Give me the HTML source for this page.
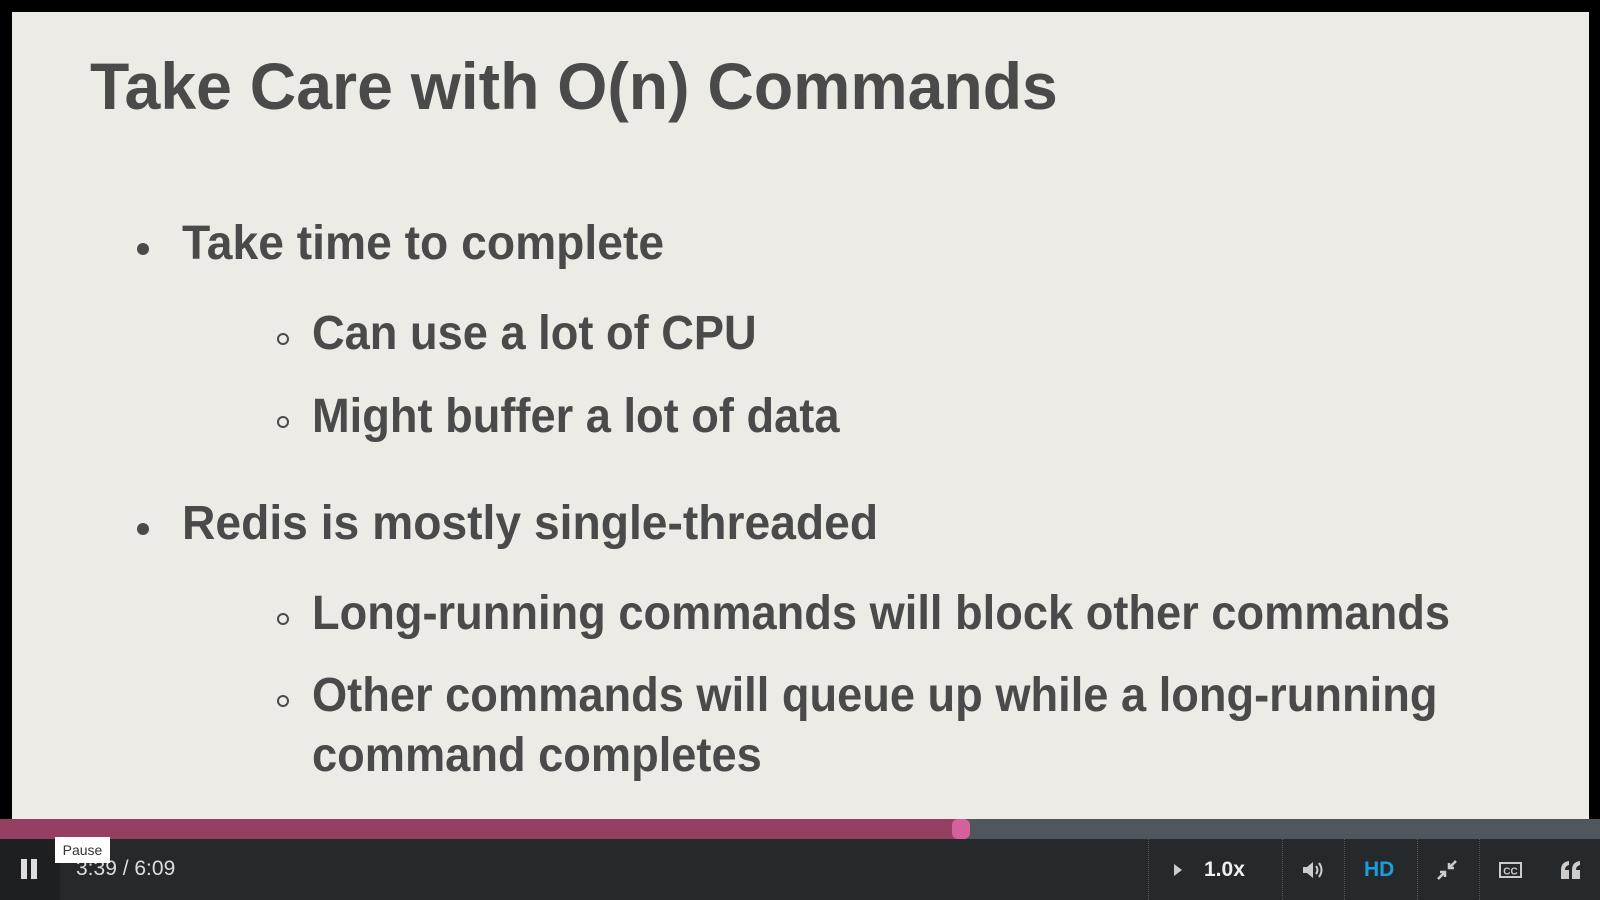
<!DOCTYPE html>
<html><head><meta charset="utf-8"><style>
*{margin:0;padding:0;box-sizing:border-box}
body{width:1600px;height:900px;background:#000;position:relative;overflow:hidden;font-family:"Liberation Sans",sans-serif}
#slide{position:absolute;left:12px;top:12px;width:1577px;height:808px;background:#edebe6;}
.t{position:absolute;color:#4a4a4a;font-weight:bold;white-space:nowrap;transform-origin:left bottom}
.h{font-size:66px;left:78px;top:36px;transform:scaleX(0.975)}
.l1{font-size:48px;left:182px;transform:scaleX(0.963)}
.l2{font-size:48px;left:312px;transform:scaleX(0.942)}
.dot{position:absolute;width:12px;height:12px;border-radius:50%;background:#4a4a4a}
.circ{position:absolute;width:12px;height:12px;border-radius:50%;border:2.5px solid #4a4a4a}
#prog{position:absolute;left:0;top:819px;width:1600px;height:20px;background:#4f575c}
#played{position:absolute;left:0;top:0;width:961px;height:20px;background:#953f63}
#handle{position:absolute;left:952px;top:0;width:18px;height:20px;background:#d3619a;border-radius:6px}
#bar{position:absolute;left:0;top:839px;width:1600px;height:61px;background:#26292c}
#pausebtn{position:absolute;left:0;top:0;width:60px;height:61px;background:#1d1f21}
.sep{position:absolute;top:0;height:61px;border-left:1px dotted #555}
#tip{position:absolute;left:55px;top:837px;width:55px;height:26px;background:#fff;color:#333;font-size:14px;text-align:center;line-height:26px}
</style></head><body>
<div id="slide">
<div class="t h">Take Care with O(n) Commands</div>
</div>
<div class="t l1" style="top:216px">Take time to complete</div>
<div class="dot" style="left:137px;top:243px"></div>
<div class="t l2" style="top:306px">Can use a lot of CPU</div>
<div class="circ" style="left:277px;top:333px"></div>
<div class="t l2" style="top:389px">Might buffer a lot of data</div>
<div class="circ" style="left:277px;top:416px"></div>
<div class="t l1" style="top:496px">Redis is mostly single-threaded</div>
<div class="dot" style="left:137px;top:523px"></div>
<div class="t l2" style="top:586px">Long-running commands will block other commands</div>
<div class="circ" style="left:277px;top:613px"></div>
<div class="t l2" style="top:668px">Other commands will queue up while a long-running</div>
<div class="circ" style="left:277px;top:695px"></div>
<div class="t l2" style="top:728px">command completes</div>

<div id="prog"><div id="played"></div><div id="handle"></div></div>
<div id="bar">
<div id="pausebtn"><div style="position:absolute;left:21px;top:20px;width:6px;height:20px;background:#ddd"></div><div style="position:absolute;left:31px;top:20px;width:6px;height:20px;background:#ddd"></div></div>
<div style="position:absolute;left:76px;top:18px;color:#ddd;font-size:21px">3:39 / 6:09</div>
<div class="sep" style="left:1148px"></div><div class="sep" style="left:1282px"></div><div class="sep" style="left:1344px"></div><div class="sep" style="left:1417px"></div><div class="sep" style="left:1479px"></div>
<svg style="position:absolute;left:1173px;top:24px" width="10" height="14"><path d="M1 1L9 7L1 13Z" fill="#ccc"/></svg>
<div style="position:absolute;left:1204px;top:19px;color:#eee;font-size:21px;font-weight:bold">1.0x</div>
<svg style="position:absolute;left:1301px;top:20px" width="24" height="22"><path d="M2 8H6L12 3V19L6 14H2Z" fill="#ccc"/><path d="M15 7Q18 11 15 15M18 4Q23 11 18 18" stroke="#ccc" stroke-width="2" fill="none"/></svg>
<div style="position:absolute;left:1364px;top:19px;color:#1b9de0;font-size:21px;font-weight:bold">HD</div>
<svg style="position:absolute;left:1437px;top:21px" width="20" height="20"><path d="M19 1L12 8M12 3V8H17M1 19L8 12M3 12H8V17" stroke="#ccc" stroke-width="2.5" fill="none"/></svg>
<svg style="position:absolute;left:1498px;top:22px" width="25" height="18"><rect x="1" y="1" width="23" height="16" fill="#ccc"/><rect x="3" y="3" width="19" height="12" fill="#26292c"/><text x="12.5" y="13.5" font-size="10" font-weight="bold" fill="#ccc" text-anchor="middle" font-family="Liberation Sans">CC</text></svg>
<svg style="position:absolute;left:1560px;top:21px" width="22" height="20"><path d="M1 19V10Q1 2 9 1V5Q5 6 5 10H9V19Z" fill="#ccc"/><path d="M12 19V10Q12 2 20 1V5Q16 6 16 10H20V19Z" fill="#ccc"/></svg>
</div>
<div id="tip">Pause</div>
</body></html>
